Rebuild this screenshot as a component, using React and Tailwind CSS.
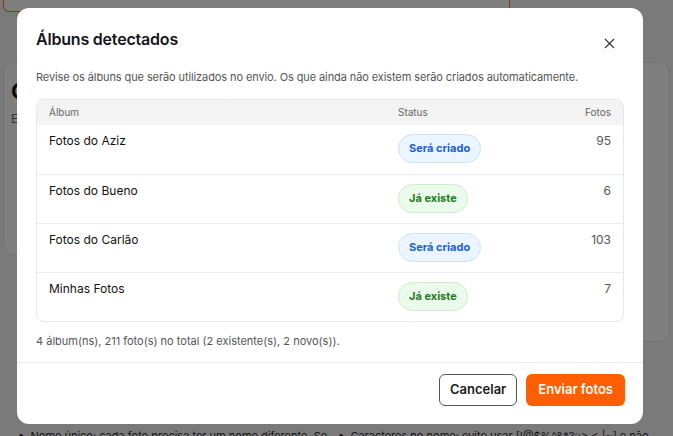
import React from 'react';
import { X } from 'lucide-react';

const albums = [
    { name: 'Fotos do Aziz', exists: false, count: 95 },
    { name: 'Fotos do Bueno', exists: true, count: 6 },
    { name: 'Fotos do Carlão', exists: false, count: 103 },
    { name: 'Minhas Fotos', exists: true, count: 7 },
];

const StatusBadge = ({ exists }) =>
    exists ? (
        <span className="inline-flex items-center h-[29px] px-[10px] rounded-full border border-[#c9efc9] bg-[#ebfbeb] text-[#237a23] text-[11px] font-bold">
            Já existe
        </span>
    ) : (
        <span className="inline-flex items-center h-[29px] px-[10px] rounded-full border border-[#cce2f8] bg-[#eaf5ff] text-[#1b5fd9] text-[11px] font-bold">
            Será criado
        </span>
    );

const App = () => {
    return (
        <div className="relative w-[673px] h-[436px] overflow-hidden bg-[#f4f4f4] font-['Inter',sans-serif]">
            {/* page behind the dialog */}
            <div className="flex flex-col gap-[50px] px-[3px]">
                <div className="h-[12px] rounded-b-[6px] border border-t-0 border-[#ff7a2e] bg-white w-[507px]"></div>
                <div className="flex gap-[14px] px-0">
                    <div className="w-[330px] h-[193px] rounded-[10px] bg-white border border-[#e6e6e6] pl-[7px] pt-[12px]">
                        <div className="text-[22px] font-bold text-[#111]">C</div>
                        <div className="text-[12px] text-[#666] mt-[2px]">E</div>
                    </div>
                    <div className="flex-1 h-[280px] rounded-[10px] bg-white border border-[#e6e6e6]"></div>
                </div>
            </div>
            <div className="absolute left-[18px] top-[428px] flex text-[11px] leading-[16px] text-[#333] whitespace-nowrap">
                <span className="w-[320px]">•&nbsp; Nome único: cada foto precisa ter um nome diferente. Se</span>
                <span>•&nbsp; Caracteres no nome: evite usar [!@$%^&*?:;&gt; &lt;.|~] e não</span>
            </div>

            {/* overlay + dialog */}
            <div className="absolute inset-0 bg-black/50 flex justify-start pl-[17px] pt-[8px]">
                <div className="w-[626px] h-[416px] bg-white rounded-[12px] flex flex-col">
                    <div className="flex items-start justify-between pl-[19px] pr-[25px] pt-[19px]">
                        <h2 className="text-[16px] font-semibold text-[#15151c] tracking-[-0.2px]">Álbuns detectados</h2>
                        <X className="w-[17px] h-[17px] text-[#333] mt-[8px]" strokeWidth={1.6} />
                    </div>
                    <p className="pl-[19px] mt-[17px] text-[11px] text-[#555] tracking-[-0.1px]">
                        Revise os álbuns que serão utilizados no envio. Os que ainda não existem serão criados automaticamente.
                    </p>
                    <div className="mx-[19px] mt-[13px] rounded-[8px] border border-[#e6e6e6] overflow-hidden">
                        <div className="grid grid-cols-[349px_1fr_80px] h-[25px] items-center bg-[#f3f3f3] text-[10px] text-[#666] px-[12px]">
                            <span>Álbum</span>
                            <span>Status</span>
                            <span className="text-right">Fotos</span>
                        </div>
                        {albums.map((a, i) => (
                            <div
                                key={a.name}
                                className={`grid grid-cols-[349px_1fr_80px] h-[49px] px-[12px] ${i > 0 ? 'border-t border-[#ececec]' : ''}`}
                            >
                                <span className="pt-[7px] text-[12px] text-[#111]">{a.name}</span>
                                <span className="pt-[9px]">
                                    <StatusBadge exists={a.exists} />
                                </span>
                                <span className="pt-[7px] text-right text-[12px] text-[#555]">{a.count}</span>
                            </div>
                        ))}
                    </div>
                    <p className="pl-[19px] mt-[11px] text-[11px] text-[#555]">
                        4 álbum(ns), 211 foto(s) no total (2 existente(s), 2 novo(s)).
                    </p>
                    <div className="mt-[13px] border-t border-[#ededed] flex justify-end gap-[9px] pr-[18px] pt-[11px]">
                        <button className="h-[32px] px-[10px] rounded-[6px] border border-[#555] bg-white text-[13px] font-semibold text-[#1b1b1b]">
                            Cancelar
                        </button>
                        <button className="h-[32px] px-[12px] rounded-[6px] bg-[#ff5f00] text-[13px] font-semibold text-white">
                            Enviar fotos
                        </button>
                    </div>
                </div>
            </div>
        </div>
    );
};

export default App;
